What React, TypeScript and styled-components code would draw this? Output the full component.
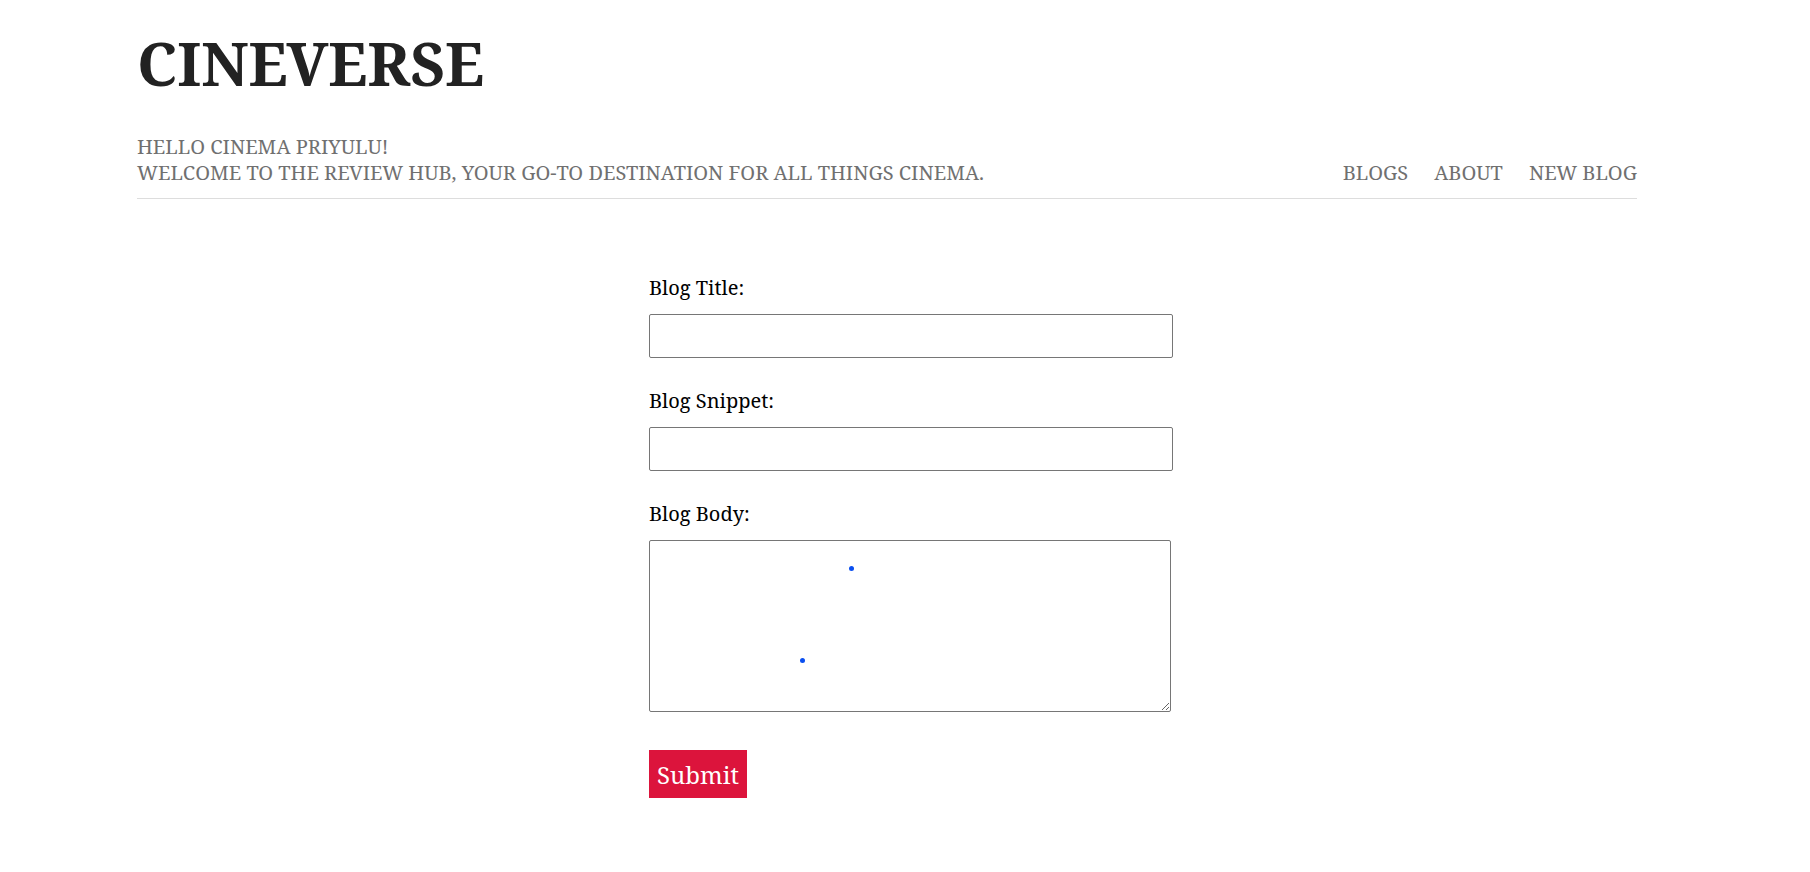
import React from "react";
import styled, { createGlobalStyle } from "styled-components";

const GlobalStyle = createGlobalStyle`
  html, body {
    margin: 0;
    padding: 0;
    background: #ffffff;
  }
  body {
    font-family: "Noto Serif", "DejaVu Serif", "Liberation Serif", serif;
  }
  * { box-sizing: border-box; }
`;

const Page = styled.div`
  width: 1500px;
  margin-left: 137px;
  padding-top: 23px;
`;

const Header = styled.header`
  border-bottom: 1px solid #dddddd;
  padding-bottom: 12px;
`;

const Brand = styled.h1`
  margin: 0;
  font-size: 60px;
  line-height: 80px;
  font-weight: 700;
  color: #222222;
  letter-spacing: 0;
`;

const HeaderRow = styled.div`
  display: flex;
  justify-content: space-between;
  align-items: flex-end;
  margin-top: 31px;
`;

const Tagline = styled.div`
  font-size: 20px;
  line-height: 26px;
  color: #707070;
  text-transform: uppercase;
`;

const Nav = styled.nav`
  display: flex;
  gap: 26px;
`;

const NavLink = styled.a`
  font-size: 20px;
  line-height: 26px;
  color: #707070;
  text-decoration: none;
  text-transform: uppercase;
  cursor: pointer;
`;

const Form = styled.form`
  width: 524px;
  margin-left: 512px;
  padding-top: 76px;
  display: flex;
  flex-direction: column;
  align-items: flex-start;
`;

const Label = styled.label`
  display: block;
  font-size: 20px;
  line-height: 26px;
  color: #000000;
  margin-bottom: 13px;
`;

const TextInput = styled.input`
  display: block;
  width: 524px;
  height: 44px;
  margin: 0 0 30px 0;
  padding: 4px 8px;
  border: 1px solid #767676;
  border-radius: 2px;
  font-family: inherit;
  font-size: 18px;
  background: #fff;
`;

const AreaWrap = styled.div`
  position: relative;
  margin-bottom: 38px;
`;

const BodyArea = styled.textarea`
  display: block;
  width: 522px;
  height: 172px;
  margin: 0;
  padding: 4px 8px;
  border: 1px solid #767676;
  border-radius: 2px;
  font-family: inherit;
  font-size: 18px;
  background: #fff;
`;

const Dot = styled.span`
  position: absolute;
  width: 5px;
  height: 5px;
  border-radius: 50%;
  background: #0a4ff0;
  pointer-events: none;
`;

const SubmitButton = styled.button`
  height: 48px;
  padding: 0 8px;
  border: 0;
  background: #dc143c;
  color: #ffffff;
  font-family: inherit;
  font-size: 24px;
  cursor: pointer;
`;

export default function App() {
  return (
    <>
      <GlobalStyle />
      <Page>
        <Header>
          <Brand>CINEVERSE</Brand>
          <HeaderRow>
            <Tagline>
              Hello Cinema Priyulu!
              <br />
              Welcome to the review hub, your go-to destination for all things cinema.
            </Tagline>
            <Nav>
              <NavLink>Blogs</NavLink>
              <NavLink>About</NavLink>
              <NavLink>New Blog</NavLink>
            </Nav>
          </HeaderRow>
        </Header>
        <Form onSubmit={(e) => e.preventDefault()}>
          <Label>Blog Title:</Label>
          <TextInput type="text" />
          <Label>Blog Snippet:</Label>
          <TextInput type="text" />
          <Label>Blog Body:</Label>
          <AreaWrap>
            <BodyArea />
            <Dot style={{ left: 200, top: 26 }} />
            <Dot style={{ left: 151, top: 118 }} />
          </AreaWrap>
          <SubmitButton type="submit">Submit</SubmitButton>
        </Form>
      </Page>
    </>
  );
}
